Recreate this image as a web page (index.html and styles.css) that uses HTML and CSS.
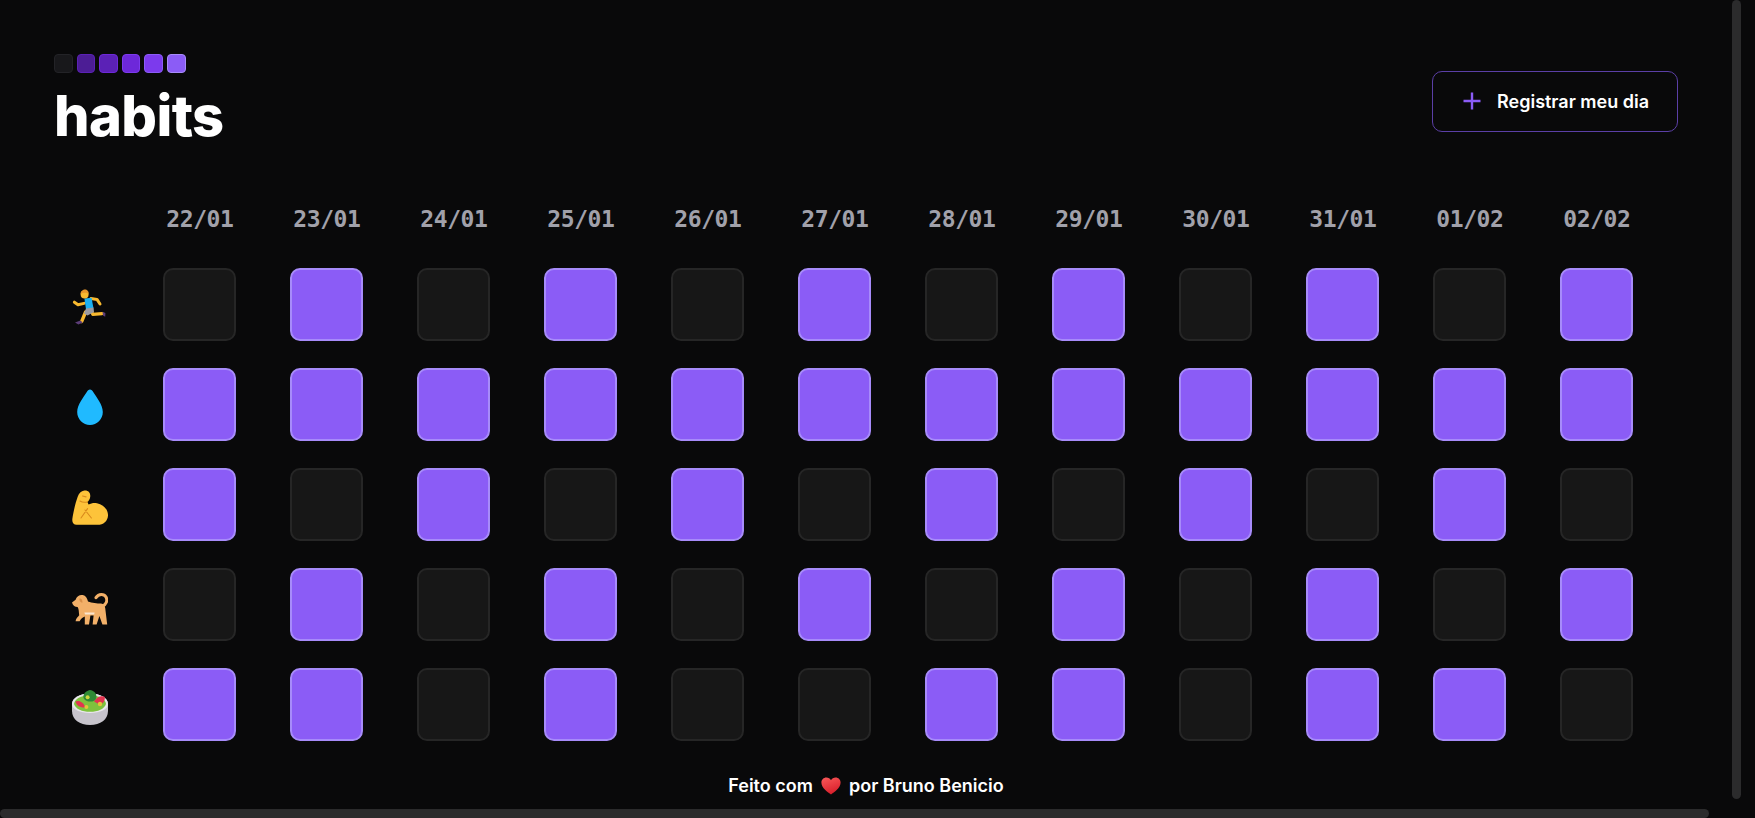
FILE: index.html
```html
<!DOCTYPE html>
<html lang="en">
  <head>
    <meta charset="UTF-8" />
    <meta name="viewport" content="width=device-width, initial-scale=1.0" />
    <title>habits</title>
    <link rel="stylesheet" href="styles.css">
  </head>
  <body>
    <div id="container">
      <header class="header">
        <div class="brand">
          <div class="logo">
            <span class="logo-step step-0"></span>
            <span class="logo-step step-1"></span>
            <span class="logo-step step-2"></span>
            <span class="logo-step step-3"></span>
            <span class="logo-step step-4"></span>
            <span class="logo-step step-5"></span>
          </div>
          <h1 class="title">habits</h1>
        </div>
        <button class="new-day">
          <svg class="plus" viewBox="0 0 18 18" width="18" height="18"><path d="M9 0.5v17M0.5 9h17" /></svg>
          Registrar meu dia
        </button>
      </header>

      <main class="table">
        <div class="corner"></div>
        <div class="date">22/01</div><div class="date">23/01</div><div class="date">24/01</div><div class="date">25/01</div><div class="date">26/01</div><div class="date">27/01</div><div class="date">28/01</div><div class="date">29/01</div><div class="date">30/01</div><div class="date">31/01</div><div class="date">01/02</div><div class="date">02/02</div>

        <!-- running -->
        <div class="habit">
          <svg viewBox="0 0 36 36" width="36" height="36">
            <path d="M9.6 32.6 13.6 23" fill="none" stroke="#f8b92f" stroke-width="3.4" stroke-linecap="round" />
            <path d="M19 21.5 20.8 25.4 30 24.6" fill="none" stroke="#f8b92f" stroke-width="3.2" stroke-linecap="round" stroke-linejoin="round" />
            <path d="M30.5 22.8 33.4 24 33.2 27.8 31 26.4Z" fill="#5c3d78" />
            <path d="M8.4 31.6 10.8 33.4 6.4 35.4 3 33.6Z" fill="#5c3d78" />
            <path d="M2.4 13.2 6 15.8 12 14.4" fill="none" stroke="#f8b92f" stroke-width="3" stroke-linecap="round" stroke-linejoin="round" />
            <path d="M19 9.4 25 10.4 28 15" fill="none" stroke="#f8b92f" stroke-width="3" stroke-linecap="round" stroke-linejoin="round" />
            <path d="M12.4 9.4 19.6 8.8 21.4 19 14 20.2Z" fill="#1eb0f0" />
            <path d="M14 19.4 21.6 18.4 22 23 15.6 26.6 12 24.4Z" fill="#9a9aa0" />
            <circle cx="12.6" cy="5.4" r="4" fill="#f8b92f" />
            <path d="M8.6 5C8.6 2 11 .4 13 .4s4 1.6 3.6 4.6C15 3.4 11.6 3.2 8.6 5Z" fill="#e8962a" />
          </svg>
        </div>
        <div class="cell"></div><div class="cell done"></div><div class="cell"></div><div class="cell done"></div><div class="cell"></div><div class="cell done"></div><div class="cell"></div><div class="cell done"></div><div class="cell"></div><div class="cell done"></div><div class="cell"></div><div class="cell done"></div>

        <!-- water -->
        <div class="habit">
          <svg viewBox="0 0 36 36" width="36" height="36">
            <path d="M18 .4C19.4 .4 20.4 1.6 21.2 3 24.4 8.4 30.8 15.6 30.8 23 30.8 30.2 25 36 18 36S5.2 30.2 5.2 23C5.2 15.6 11.6 8.4 14.8 3 15.6 1.6 16.6 .4 18 .4Z" fill="#20baff" />
          </svg>
        </div>
        <div class="cell done"></div><div class="cell done"></div><div class="cell done"></div><div class="cell done"></div><div class="cell done"></div><div class="cell done"></div><div class="cell done"></div><div class="cell done"></div><div class="cell done"></div><div class="cell done"></div><div class="cell done"></div><div class="cell done"></div>

        <!-- gym -->
        <div class="habit">
          <svg viewBox="0 0 36 36" width="36" height="36">
            <path d="M12.4 1.6C16.4 1.2 18.8 4 18.2 8 17.8 10.6 16.6 12 15.4 13L16.6 15.6C19 14.2 22 13.6 25 14.2 31.5 15.4 36.2 20.6 36 26.4 35.8 32 31.4 35.8 25.6 35.8H4.6C1.4 35.8 -.2 33 .4 29.6 1.4 23 3.4 14 5.6 8 6.8 4.4 9 2 12.4 1.6Z" fill="#fdc33a" />
            <path d="M10.6 7 14 7.8" fill="none" stroke="#d98a1c" stroke-width="1.2" stroke-linecap="round" />
            <path d="M8 12C10 13.4 12.4 13.6 15.4 13M15.6 19.6 9 29M13 21 19.4 29" fill="none" stroke="#d98a1c" stroke-width="1.1" stroke-linecap="round" />
          </svg>
        </div>
        <div class="cell done"></div><div class="cell"></div><div class="cell done"></div><div class="cell"></div><div class="cell done"></div><div class="cell"></div><div class="cell done"></div><div class="cell"></div><div class="cell done"></div><div class="cell"></div><div class="cell done"></div><div class="cell"></div>

        <!-- dog -->
        <div class="habit">
          <svg viewBox="0 0 36 36" width="36" height="36">
            <path d="M30.4 17C34.4 15.4 35.8 11.4 34 8 32 4.6 26.6 4.4 24 8.6" fill="none" stroke="#f2b069" stroke-width="3" stroke-linecap="round" />
            <path d="M0 13.6 3.6 10.8C4.6 7 8 5.4 10.8 6 13.8 6.6 15.2 9.4 16 12.4 20 14 25 14.2 29 14.6 31.4 14.8 33 16.6 33.2 19L35.2 35.4H30.4L27.4 27 24.6 35.4H20.6L21.6 26.6H18.4L17 35.4H12.8L12.8 27.6C10.8 28.4 9.4 29.4 7.6 32.2H3.6C3.6 29.6 6.2 27.8 7.2 26.2 6.8 23 7 20.4 5.6 18 3 18 .8 16.8 0 13.6Z" fill="#f2b069" />
            <path d="M12.4 23.4H22.6L22.2 25.4H13Z" fill="#fbe6cf" />
            <path d="M7.6 9.2C9.4 9.4 10.8 11 10.4 13.8 8.2 13.2 6.8 11.4 7.6 9.2Z" fill="#d98f49" />
          </svg>
        </div>
        <div class="cell"></div><div class="cell done"></div><div class="cell"></div><div class="cell done"></div><div class="cell"></div><div class="cell done"></div><div class="cell"></div><div class="cell done"></div><div class="cell"></div><div class="cell done"></div><div class="cell"></div><div class="cell done"></div>

        <!-- salad -->
        <div class="habit">
          <svg viewBox="0 0 36 36" width="36" height="36">
            <path d="M0 15C0 8.6 8 4.4 18 4.4S36 8.6 36 15V22C36 30.6 28.4 36 18 36S0 30.6 0 22Z" fill="#c7c4cc" />
            <path d="M0 15C0 8.6 8 4.4 18 4.4S36 8.6 36 15C36 20.4 28 24 18 24S0 20.4 0 15Z" fill="#e9e8ec" />
            <path d="M2 15C2.6 10 9 6.6 18 6.6S33.4 10 34 15C32.4 20 26 22.8 18 22.8S3.6 20 2 15Z" fill="#7ec23d" />
            <path d="M3.4 12.6C7 10.8 11.4 13 13.4 18.6 9 18.8 5 17.6 3.4 12.6Z" fill="#e2344f" />
            <path d="M22 12.4C25 7.6 29 6.2 32.6 7.8 33.6 11.4 31 14.6 28 15.8Z" fill="#e2344f" />
            <path d="M18 1C20.6 1.4 24.6 3.4 24.4 7.4 24.6 11 21.4 12.6 18 12.6 14.8 12.6 11.4 11 11.4 7.6 11.6 3.6 15.4 1.4 18 1Z" fill="#2f8a36" />
            <circle cx="15.6" cy="8.2" r="2" fill="#cfd63a" />
            <circle cx="14.4" cy="18" r="2" fill="#e3c53a" />
            <circle cx="28" cy="15" r="2.2" fill="#e3c53a" />
          </svg>
        </div>
        <div class="cell done"></div><div class="cell done"></div><div class="cell"></div><div class="cell done"></div><div class="cell"></div><div class="cell"></div><div class="cell done"></div><div class="cell done"></div><div class="cell"></div><div class="cell done"></div><div class="cell done"></div><div class="cell"></div>
      </main>

      <footer class="footer">
        Feito com
        <svg class="heart" viewBox="0 0 20 18" width="20" height="18">
          <defs>
            <linearGradient id="heartFill" x1="0" y1="0" x2="0.4" y2="1">
              <stop offset="0" stop-color="#fb5a5a" />
              <stop offset="1" stop-color="#d9202c" />
            </linearGradient>
          </defs>
          <path d="M10 17.6C7 15.4 .4 11.4 .4 5.6 .4 2.6 2.6 .4 5.4 .4 7.4 .4 9 1.4 10 3.2 11 1.4 12.6 .4 14.6 .4 17.4 .4 19.6 2.6 19.6 5.6 19.6 11.4 13 15.4 10 17.6Z" fill="url(#heartFill)" />
        </svg>
        por Bruno Benicio
      </footer>
    </div>

    <!-- custom scroll thumbs -->
    <div class="thumb-y"></div>
    <div class="thumb-x"></div>
  </body>
</html>
```

FILE: styles.css
```css
* {
  box-sizing: border-box;
}
html,
body {
  height: 100%;
  margin: 0;
  overflow: hidden;
}
body {
  font-family: Inter, "Liberation Sans", sans-serif;
  background-color: #09090a;
  color: #fff;
}
#container {
  width: 1733px;
  padding: 54px 55px 0 54px;
}
.header {
  display: flex;
  justify-content: space-between;
  align-items: center;
}
.logo {
  display: flex;
  gap: 4px;
}
.logo-step {
  width: 18.6px;
  height: 18.6px;
  border-radius: 4px;
  border: 1px solid;
}
.step-0 { background-color: #18181b; border-color: #232327; }
.step-1 { background-color: #4c1d95; border-color: #5b21b6; }
.step-2 { background-color: #5b21b6; border-color: #6d28d9; }
.step-3 { background-color: #6d28d9; border-color: #7c3aed; }
.step-4 { background-color: #7c3aed; border-color: #8b5cf6; }
.step-5 { background-color: #8b5cf6; border-color: #a78bfa; }
.title {
  margin: 13px 0 0;
  font-size: 56px;
  font-weight: 800;
  line-height: 60px;
  letter-spacing: -0.6px;
}
.new-day {
  display: flex;
  align-items: center;
  gap: 16px;
  width: 246px;
  height: 61px;
  margin-top: 3px;
  padding: 0 0 0 30px;
  background: transparent;
  border: 1px solid #5b3fa6;
  border-radius: 10px;
  color: #fff;
  font-family: inherit;
  font-size: 18px;
  font-weight: 600;
  white-space: nowrap;
}
.plus path {
  fill: none;
  stroke: #8b5cf6;
  stroke-width: 2.4;
}
.table {
  display: grid;
  grid-template-columns: 55.4px repeat(12, 73px);
  grid-template-rows: 41px;
  grid-auto-rows: 73px;
  column-gap: 54px;
  row-gap: 27px;
  margin-top: 54px;
}
.date {
  padding-top: 6px;
  font-family: "DejaVu Sans Mono", monospace;
  font-size: 23px;
  font-weight: 700;
  line-height: 26px;
  letter-spacing: -0.4px;
  color: #a1a1aa;
  text-align: center;
  white-space: nowrap;
}
.habit {
  display: flex;
  align-items: flex-end;
  padding: 0 0 0 18.3px;
}
.habit svg {
  flex: none;
  margin-bottom: 16px;
}
.cell {
  background-color: #171717;
  border: 2px solid #262626;
  border-radius: 10px;
}
.cell.done {
  background-color: #8b5cf6;
  border-color: #a78bfa;
}
.footer {
  display: flex;
  justify-content: center;
  align-items: center;
  gap: 8px;
  margin-top: 34px;
  font-size: 18px;
  font-weight: 600;
  line-height: 22px;
}
.thumb-y,
.thumb-x {
  position: fixed;
  background-color: #2b2b2c;
  border-radius: 5px;
}
.thumb-y {
  top: 0;
  left: 1732px;
  width: 9px;
  height: 799px;
}
.thumb-x {
  left: 0;
  bottom: 0;
  width: 1709px;
  height: 9px;
}
```
